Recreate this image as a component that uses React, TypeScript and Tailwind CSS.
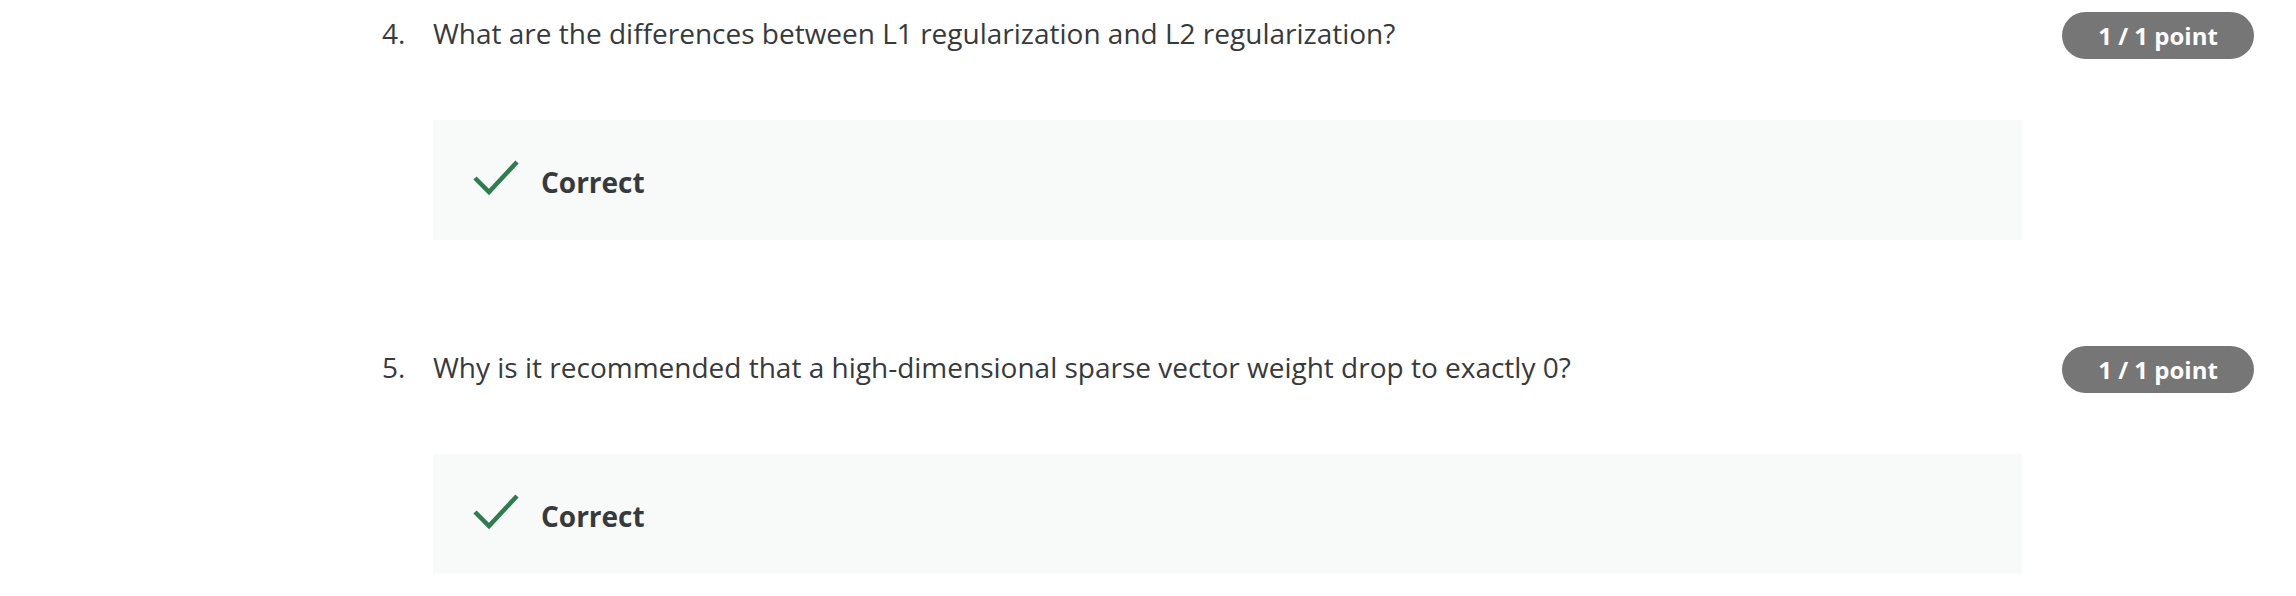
import React from 'react';

const questions = [
  { num: 4, text: 'What are the differences between L1 regularization and L2 regularization?' },
  { num: 5, text: 'Why is it recommended that a high-dimensional sparse vector weight drop to exactly 0?' },
];

function CheckMark() {
  return (
    <svg width="46" height="36" viewBox="0 0 46 36" fill="none">
      <path d="M2 19 L16 33 L44 3" stroke="#2e7d4f" strokeWidth="4.5" />
    </svg>
  );
}

export default function App() {
  return (
    <div className="w-[2296px] h-[596px] overflow-hidden bg-white font-['Open_Sans',sans-serif] text-[#373a3c]">
      {questions.map((q) => (
        <div key={q.num} className="h-[334px] pt-[12px] pl-[382px] pr-[42px] flex items-start">
          <div className="w-[51px] text-[28px] leading-[42px]">{q.num}.</div>
          <div className="w-[1590px]">
            <div className="text-[28px] leading-[42px]">{q.text}</div>
            {/* feedback */}
            <div className="mt-[66px] h-[120px] bg-[#f8f9f9] flex items-center pl-[40px]">
              <div className="-mt-[6px]">
                <CheckMark />
              </div>
              <span className="ml-[22px] text-[28px] font-bold mt-[4px]">Correct</span>
            </div>
          </div>
          <div className="ml-[40px] w-[192px] h-[47px] rounded-full bg-[#767676] text-white font-bold text-[24px] flex items-center justify-center">
            1 / 1 point
          </div>
        </div>
      ))}
    </div>
  );
}
